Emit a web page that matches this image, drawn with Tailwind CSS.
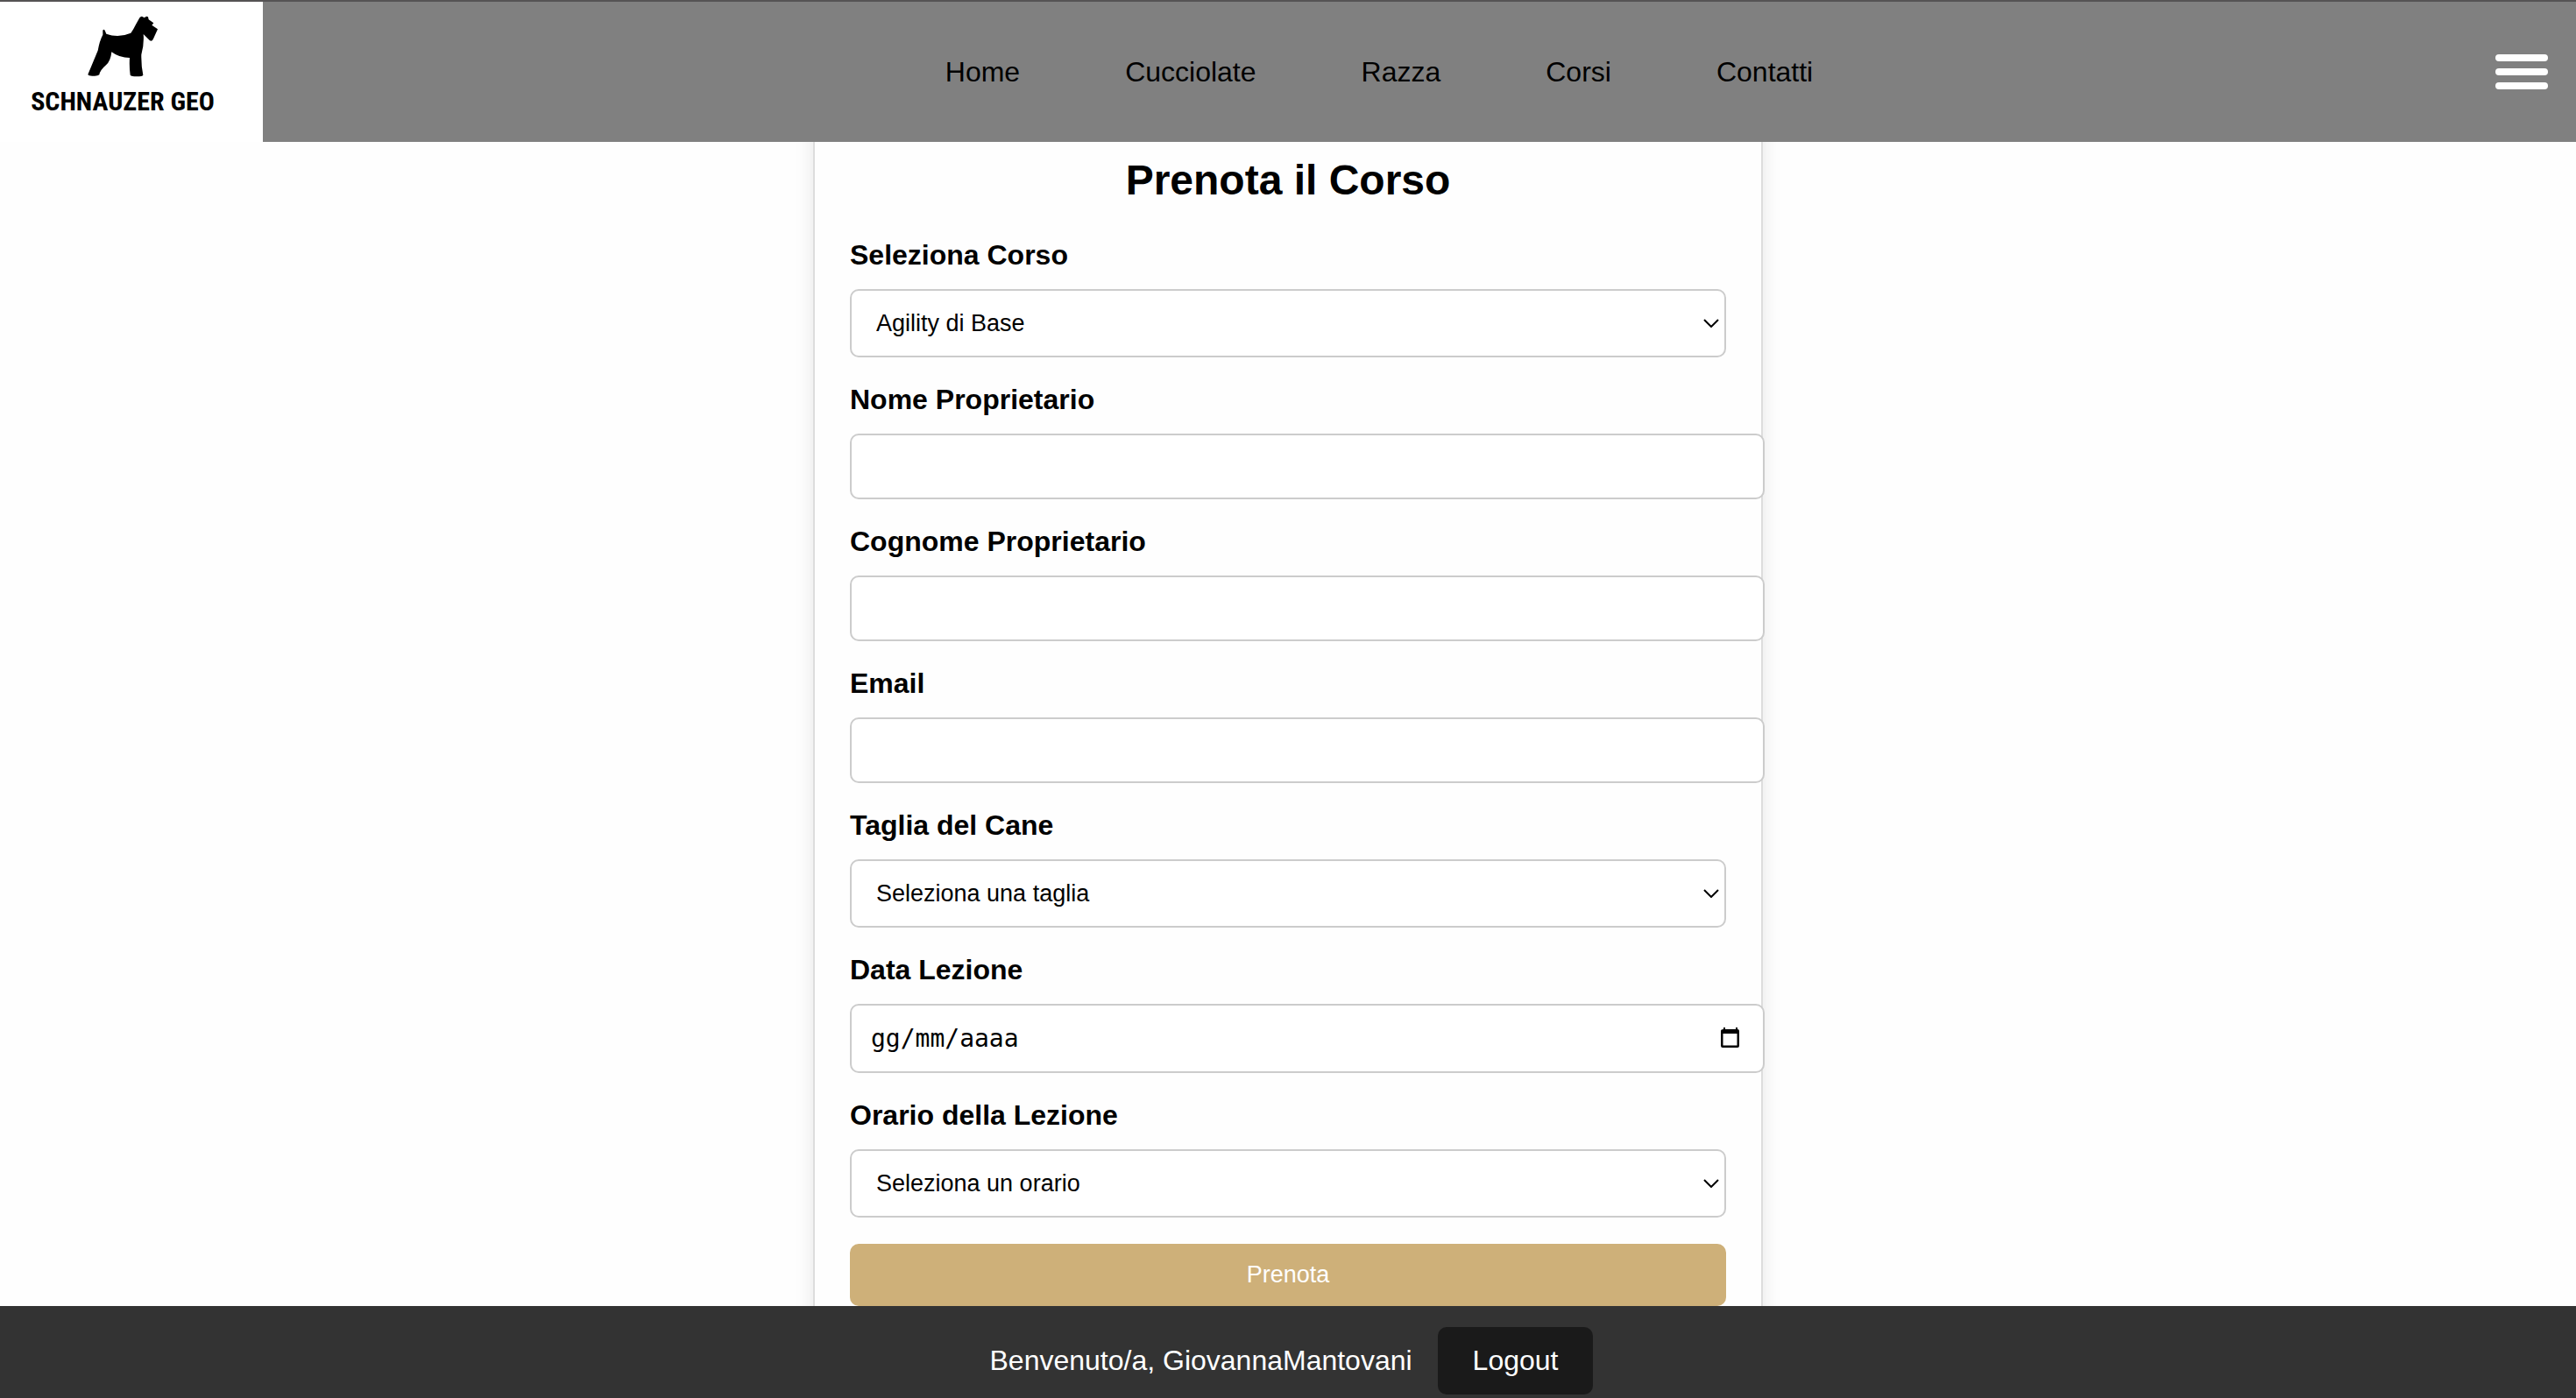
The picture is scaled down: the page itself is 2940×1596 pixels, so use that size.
<!DOCTYPE html>
<html lang="it">
<head>
<meta charset="utf-8">
<meta name="viewport" content="width=device-width, initial-scale=1">
<title>Prenota il Corso</title>
<script src="https://cdn.jsdelivr.net/npm/@tailwindcss/browser@4"></script>
</head>
<body class="min-h-screen bg-[#fefefe] font-['Liberation_Sans',Arial,sans-serif] text-[32px] leading-[37px] text-black">

<header class="fixed inset-x-0 top-0 z-10 flex items-center justify-between border-t-2 border-[#555354] bg-[#808080] pr-8">
  <a href="#" class="flex h-40 w-[300px] flex-col items-center bg-white pt-4 pr-5">
    <svg class="h-[70px] w-20" viewBox="302 53 240 210" aria-hidden="true">
      <path d="M303 254 L337 172 Q343 138 354 118 L354 103 Q357 98 361 103 L366 115 Q408 130 450 112 Q460 98 467 83 L480 60 Q486 52 493 58 L498 59 Q503 52 509 57 L511 66 L528 78 L522 85 L542 99 L526 134 Q522 142 515 138 L493 116 Q496 150 486 186 Q485 222 492 256 Q490 261 470 261 Q452 261 448 256 Q444 226 446 197 Q410 197 384 177 Q381 208 365 222 Q344 240 342 255 Q336 260 322 259 Q306 260 303 254 Z"/>
    </svg>
    <span class="font-['Liberation_Sans_Narrow','Roboto_Condensed',sans-serif] mt-2 text-[30px] leading-10 font-bold whitespace-nowrap">SCHNAUZER GEO</span>
  </a>
  <nav class="flex gap-[120px]">
    <a href="#">Home</a>
    <a href="#">Cucciolate</a>
    <a href="#">Razza</a>
    <a href="#">Corsi</a>
    <a href="#">Contatti</a>
  </nav>
  <button type="button" aria-label="Menu" class="flex w-[60px] flex-col gap-2">
    <span class="h-2 w-full rounded-full bg-white"></span>
    <span class="h-2 w-full rounded-full bg-white"></span>
    <span class="h-2 w-full rounded-full bg-white"></span>
  </button>
</header>

<main class="pt-[136px]">
  <form class="mx-auto w-full max-w-[1084px] border-2 border-[#ddd] bg-[#fefefe] p-10 shadow-[0_0_20px_rgba(0,0,0,0.1)]">
    <h1 class="mb-10 text-center text-[48px] leading-[55px] font-bold">Prenota il Corso</h1>

    <label for="corso" class="mb-5 block font-bold">Seleziona Corso</label>
    <div class="relative mb-[30px]">
      <select id="corso" class="block h-[78px] w-full appearance-none rounded-[10px] border-2 border-[#ccc] bg-white px-7 text-[27px] leading-[31px]">
        <option>Agility di Base</option>
      </select>
      <svg class="pointer-events-none absolute top-[34px] right-2 h-[10px] w-[18px]" viewBox="0 0 18 10" fill="none" stroke="#000" stroke-width="2" aria-hidden="true"><path d="M1 1l8 8 8-8"/></svg>
    </div>

    <label for="nome" class="mb-5 block font-bold">Nome Proprietario</label>
    <input id="nome" type="text" class="mb-[30px] block h-[75px] w-[calc(100%+44px)] rounded-[10px] border-2 border-[#ccc] bg-white px-5 text-[27px]">

    <label for="cognome" class="mb-5 block font-bold">Cognome Proprietario</label>
    <input id="cognome" type="text" class="mb-[30px] block h-[75px] w-[calc(100%+44px)] rounded-[10px] border-2 border-[#ccc] bg-white px-5 text-[27px]">

    <label for="email" class="mb-5 block font-bold">Email</label>
    <input id="email" type="email" class="mb-[30px] block h-[75px] w-[calc(100%+44px)] rounded-[10px] border-2 border-[#ccc] bg-white px-5 text-[27px]">

    <label for="taglia" class="mb-5 block font-bold">Taglia del Cane</label>
    <div class="relative mb-[30px]">
      <select id="taglia" class="block h-[78px] w-full appearance-none rounded-[10px] border-2 border-[#ccc] bg-white px-7 text-[27px] leading-[31px]">
        <option>Seleziona una taglia</option>
      </select>
      <svg class="pointer-events-none absolute top-[34px] right-2 h-[10px] w-[18px]" viewBox="0 0 18 10" fill="none" stroke="#000" stroke-width="2" aria-hidden="true"><path d="M1 1l8 8 8-8"/></svg>
    </div>

    <label for="data" class="mb-5 block font-bold">Data Lezione</label>
    <div class="relative mb-[30px] w-[calc(100%+44px)]">
      <input id="data" type="text" placeholder="gg/mm/aaaa" class="block h-[79px] w-full rounded-[10px] border-2 border-[#ccc] bg-white px-[22px] font-['DejaVu_Sans_Mono',monospace] text-[28px] placeholder:text-black">
      <button type="button" aria-label="Apri calendario" class="absolute top-[26px] right-7">
        <svg class="h-6 w-[22px]" viewBox="0 0 22 24" aria-hidden="true"><path fill-rule="evenodd" d="M3 1h2v2h12V1h2v2q2 0 2 2v17q0 2-2 2H2q-2 0-2-2V5q0-2 3-2zM2.500 8v13.500h16V8z"/></svg>
      </button>
    </div>

    <label for="orario" class="mb-5 block font-bold">Orario della Lezione</label>
    <div class="relative mb-[30px]">
      <select id="orario" class="block h-[78px] w-full appearance-none rounded-[10px] border-2 border-[#ccc] bg-white px-7 text-[27px] leading-[31px]">
        <option>Seleziona un orario</option>
      </select>
      <svg class="pointer-events-none absolute top-[34px] right-2 h-[10px] w-[18px]" viewBox="0 0 18 10" fill="none" stroke="#000" stroke-width="2" aria-hidden="true"><path d="M1 1l8 8 8-8"/></svg>
    </div>

    <button type="submit" class="block w-full rounded-[10px] bg-[#ceb079] py-5 text-[27px] leading-[31px] text-white">Prenota</button>
  </form>
</main>

<footer class="fixed inset-x-0 bottom-0 z-10 flex items-center justify-center gap-[29px] bg-[#333] pt-6 pb-1 pl-2 text-white">
  <span>Benvenuto/a, GiovannaMantovani</span>
  <button type="button" class="rounded-[10px] bg-[#1a1a1a] px-10 py-5">Logout</button>
</footer>

</body>
</html>
